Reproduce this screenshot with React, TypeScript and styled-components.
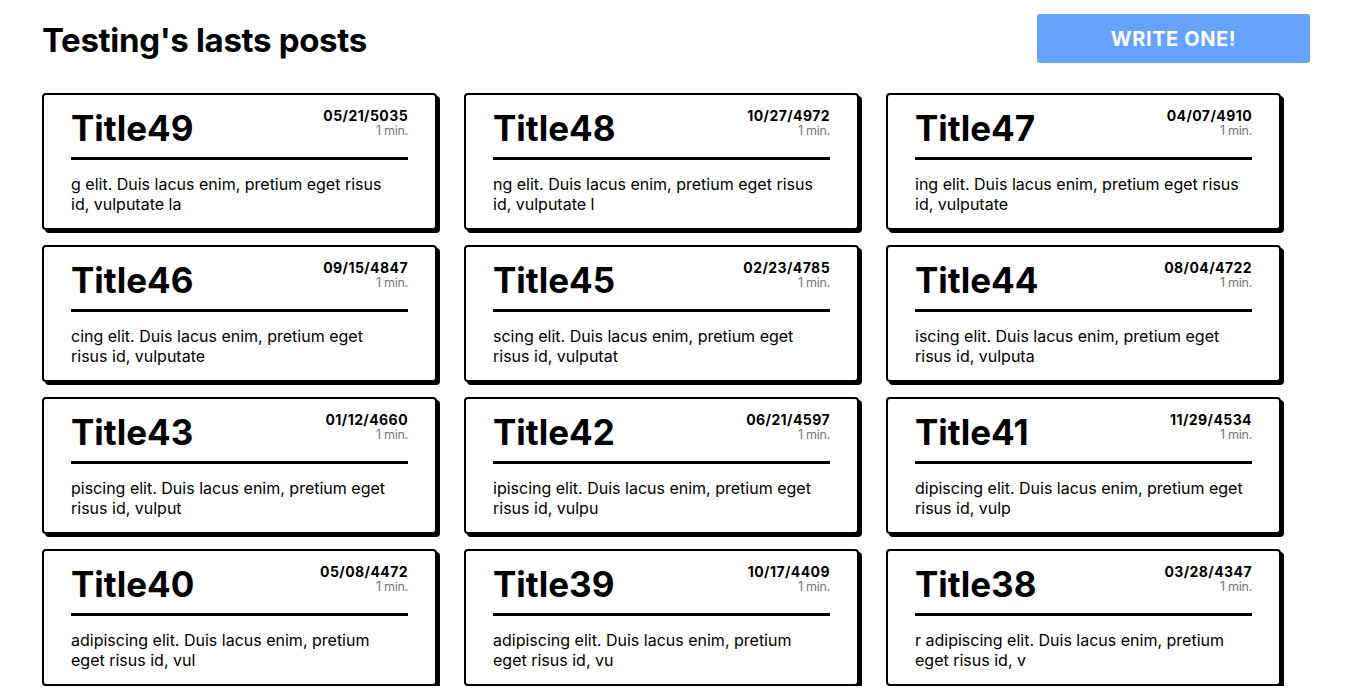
import React from 'react';
import styled, { createGlobalStyle } from 'styled-components';

const GlobalStyle = createGlobalStyle`
	body {
		margin: 0;
		background: #fff;
		color: #000;
		font-family: Inter, 'Noto Sans', sans-serif;
	}
`;

type Post = {
	id: number;
	date: string;
	lines: [string, string];
};

const posts: Post[] = [
	{ id: 49, date: '05/21/5035', lines: ['g elit. Duis lacus enim, pretium eget risus', 'id, vulputate la'] },
	{ id: 48, date: '10/27/4972', lines: ['ng elit. Duis lacus enim, pretium eget risus', 'id, vulputate l'] },
	{ id: 47, date: '04/07/4910', lines: ['ing elit. Duis lacus enim, pretium eget risus', 'id, vulputate'] },
	{ id: 46, date: '09/15/4847', lines: ['cing elit. Duis lacus enim, pretium eget', 'risus id, vulputate'] },
	{ id: 45, date: '02/23/4785', lines: ['scing elit. Duis lacus enim, pretium eget', 'risus id, vulputat'] },
	{ id: 44, date: '08/04/4722', lines: ['iscing elit. Duis lacus enim, pretium eget', 'risus id, vulputa'] },
	{ id: 43, date: '01/12/4660', lines: ['piscing elit. Duis lacus enim, pretium eget', 'risus id, vulput'] },
	{ id: 42, date: '06/21/4597', lines: ['ipiscing elit. Duis lacus enim, pretium eget', 'risus id, vulpu'] },
	{ id: 41, date: '11/29/4534', lines: ['dipiscing elit. Duis lacus enim, pretium eget', 'risus id, vulp'] },
	{ id: 40, date: '05/08/4472', lines: ['adipiscing elit. Duis lacus enim, pretium', 'eget risus id, vul'] },
	{ id: 39, date: '10/17/4409', lines: ['adipiscing elit. Duis lacus enim, pretium', 'eget risus id, vu'] },
	{ id: 38, date: '03/28/4347', lines: ['r adipiscing elit. Duis lacus enim, pretium', 'eget risus id, v'] },
];

const PostCard = ({ post }: { post: Post }) => {
	return (
		<Card>
			<CardHeader>
				<CardTitle>Title{post.id}</CardTitle>
				<Meta>
					<PostDate>{post.date}</PostDate>
					<ReadTime>1 min.</ReadTime>
				</Meta>
			</CardHeader>
			<Divider />
			<Excerpt>
				{post.lines.map((l) => (
					<Line key={l}>{l}</Line>
				))}
			</Excerpt>
		</Card>
	);
};

const App = () => {
	return (
		<Page>
			<GlobalStyle />
			<TopBar>
				<Heading>Testing's lasts posts</Heading>
				<WriteButton>Write one!</WriteButton>
			</TopBar>
			<Grid>
				{posts.map((p) => (
					<PostCard key={p.id} post={p} />
				))}
			</Grid>
		</Page>
	);
};

export default App;

const Page = styled.div`
	padding: 14px 41px 0 42px;
`;

const TopBar = styled.div`
	display: flex;
	justify-content: space-between;
	align-items: center;
`;

const Heading = styled.h1`
	margin: 2px 0 0;
	font-size: 33px;
	font-weight: 700;
	letter-spacing: -0.01em;
`;

const WriteButton = styled.button`
	width: 273px;
	height: 49px;
	border: none;
	border-radius: 3px;
	background: #66a3ff;
	color: #fff;
	font-family: Inter, sans-serif;
	font-size: 20px;
	font-weight: 700;
	letter-spacing: 0.03em;
	text-transform: uppercase;
	cursor: pointer;
`;

const Grid = styled.div`
	margin-top: 30px;
	display: grid;
	grid-template-columns: repeat(3, 395px);
	column-gap: 27px;
	row-gap: 15px;
`;

const Card = styled.div`
	box-sizing: border-box;
	height: 137px;
	padding: 13px 27px 14px;
	border: 2px solid #000;
	border-radius: 4px;
	background: #fff;
	box-shadow: 3px 3px 0 #000;
`;

const CardHeader = styled.div`
	display: flex;
	justify-content: space-between;
	align-items: flex-start;
`;

const CardTitle = styled.h2`
	margin: 0;
	font-size: 35px;
	line-height: 41px;
	font-weight: 700;
`;

const Meta = styled.div`
	text-align: right;
`;

const PostDate = styled.div`
	font-size: 14px;
	line-height: 16px;
	font-weight: 700;
	letter-spacing: 0.03em;
`;

const ReadTime = styled.div`
	font-size: 12.5px;
	line-height: 14px;
	color: #777;
	letter-spacing: -0.02em;
`;

const Divider = styled.hr`
	margin: 8px 0 0;
	border: none;
	height: 3px;
	background: #000;
`;

const Excerpt = styled.div`
	margin-top: 14px;
	font-size: 16px;
	line-height: 20px;
`;

const Line = styled.span`
	display: block;
	white-space: nowrap;
`;
